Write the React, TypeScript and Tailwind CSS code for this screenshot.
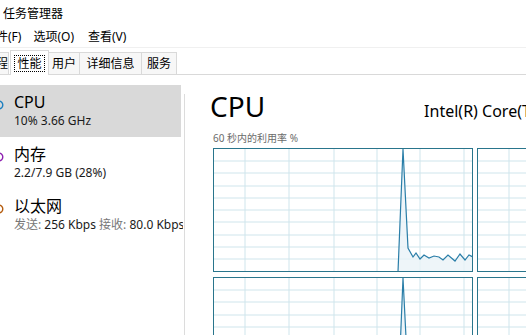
import React from "react";

const font = { fontFamily: '"Noto Sans", "Noto Sans CJK SC", sans-serif' };

const pts =
  "184,123 189,0 194,99 199,108 202,104 206,110 210,106 215,109 220,107 225,108 229,111 234,106 241,112 246,105 251,111 255,106 259,108";

function Graph({ line }: { line?: boolean }) {
  const vx = [31, 75, 120, 163, 206, 250];
  const hy = [12, 24, 37, 49, 61, 73, 86, 98, 110];
  return (
    <div className="w-[260px] h-[124px] border border-[#29758c] bg-white shrink-0">
      <svg width="258" height="122" viewBox="0 0 258 122" className="block">
        {vx.map((x) => (
          <line key={"v" + x} x1={x} y1={0} x2={x} y2={122} stroke="#cfe5ec" strokeWidth={1} />
        ))}
        {hy.map((y) => (
          <line key={"h" + y} x1={0} y1={y} x2={258} y2={y} stroke="#cfe5ec" strokeWidth={1} />
        ))}
        {line && (
          <>
            <polygon points={"183,122 " + pts + " 258,122"} fill="#eaf3f8" fillOpacity={0.8} />
            <polyline points={pts} fill="none" stroke="#2a7ea8" strokeWidth={1.2} />
          </>
        )}
      </svg>
    </div>
  );
}

function Item({
  color,
  title,
  sub,
  selected,
}: {
  color: string;
  title: string;
  sub: React.ReactNode;
  selected?: boolean;
}) {
  return (
    <div className={`relative h-[52px] w-[181px] pl-[14px] pt-[7px] ${selected ? "bg-[#d9d9d9]" : ""}`}>
      <svg width="8" height="10" className="absolute left-0 top-[15px]">
        <circle cx="-1" cy="5" r="3.8" fill="none" stroke={color} strokeWidth="1.4" />
      </svg>
      <div className="text-[16px] leading-[21px] text-black whitespace-nowrap">{title}</div>
      <div className="text-[12px] leading-[16px] text-[#1a1a1a] whitespace-nowrap">{sub}</div>
    </div>
  );
}

export default function App() {
  return (
    <div className="w-[526px] h-[335px] overflow-hidden bg-white text-black" style={font}>
      {/* title bar */}
      <div className="h-[27px] flex items-center pl-[3px] text-[12px]">任务管理器</div>

      {/* menu */}
      <div className="h-[21px] flex items-center text-[12px] border-b border-[#f0f0f0] overflow-hidden">
        <span className="-ml-[16px]">文件(F)</span>
        <span className="ml-[12px]">选项(O)</span>
        <span className="ml-[14px]">查看(V)</span>
      </div>

      {/* tabs */}
      <div className="h-[27px] flex items-end border-b border-[#d9d9d9] text-[12px]">
        <div className="h-[22px] w-[9px] overflow-hidden flex items-center justify-end border-r border-t border-[#d9d9d9] bg-[#f7f7f7]">
          <span className="whitespace-nowrap">进程</span>
        </div>
        <div className="h-[25px] w-[39px] ml-px flex items-center justify-center border border-b-0 border-[#d9d9d9] bg-white -mb-px relative z-10">
          <span className="border border-dotted border-black px-[2px] leading-[15px]">性能</span>
        </div>
        <div className="h-[22px] w-[31px] flex items-center justify-center border-t border-r border-[#d9d9d9] bg-[#f7f7f7]">
          用户
        </div>
        <div className="h-[22px] w-[62px] flex items-center justify-center border-t border-r border-[#d9d9d9] bg-[#f7f7f7]">
          详细信息
        </div>
        <div className="h-[22px] w-[35px] flex items-center justify-center border-t border-r border-[#d9d9d9] bg-[#f7f7f7]">
          服务
        </div>
      </div>

      {/* body */}
      <div className="flex">
        {/* left list */}
        <div className="w-[186px] shrink-0 pt-[10px] flex">
          <div className="w-[183px] overflow-hidden">
            <Item selected color="#1b7fc0" title="CPU" sub="10% 3.66 GHz" />
            <Item color="#8d1fb0" title="内存" sub="2.2/7.9 GB (28%)" />
            <Item
              color="#b45b0d"
              title="以太网"
              sub={
                <>
                  <span className="text-[#777]">发送:</span> 256 Kbps <span className="text-[#777]">接收:</span> 80.0 Kbps
                </>
              }
            />
          </div>
          <div className="w-px mt-[9px] h-[250px] bg-[#dcdcdc] -ml-px translate-x-[2px]" />
        </div>

        {/* right panel */}
        <div className="flex-1 pl-[24px] pt-[14px] min-w-0">
          <div className="flex items-baseline whitespace-nowrap">
            <span className="text-[28px] leading-[34px]">CPU</span>
            <span className="ml-[159px] text-[16px]">Intel(R) Core(TM) i5</span>
          </div>
          <div className="text-[10px] leading-[14px] text-[#6b6b6b] mt-[8px] ml-[3px]">60 秒内的利用率 %</div>
          <div className="ml-[3px] mt-[3px] grid grid-cols-[260px_260px] gap-x-[4px] gap-y-[5px]">
            <Graph line />
            <Graph />
            <Graph line />
            <Graph />
          </div>
        </div>
      </div>
    </div>
  );
}
